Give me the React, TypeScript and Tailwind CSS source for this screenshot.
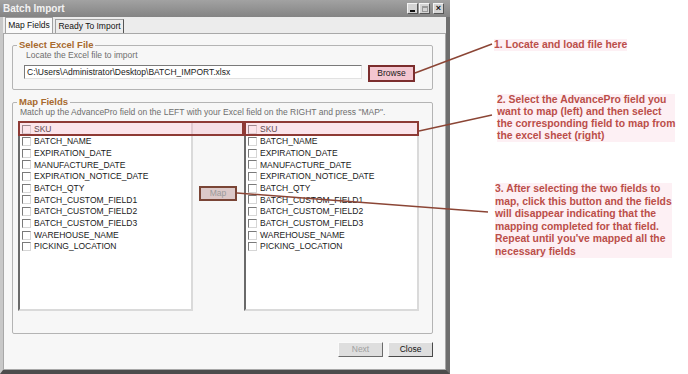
const FIELDS = [
  "SKU",
  "BATCH_NAME",
  "EXPIRATION_DATE",
  "MANUFACTURE_DATE",
  "EXPIRATION_NOTICE_DATE",
  "BATCH_QTY",
  "BATCH_CUSTOM_FIELD1",
  "BATCH_CUSTOM_FIELD2",
  "BATCH_CUSTOM_FIELD3",
  "WAREHOUSE_NAME",
  "PICKING_LOCATION",
];

function CheckBox() {
  return (
    <span className="inline-block w-[9px] h-[9px] shrink-0 bg-white border border-t-[#7a7a7a] border-l-[#7a7a7a] border-b-[#d6d6d6] border-r-[#d6d6d6]" />
  );
}

function FieldList({ className }: { className: string }) {
  return (
    <div
      className={`h-[190px] bg-white pt-[1px] pl-[2px] border-2 border-t-[#8a8a8a] border-l-[#6a6a6a] border-b-[#dadada] border-r-[#dadada] ${className}`}
    >
      {FIELDS.map((f) => (
        <div key={f} className="flex items-center gap-[3px] h-[11.7px] text-[8.5px] text-[#1a1a1a]">
          <CheckBox />
          <span>{f}</span>
        </div>
      ))}
    </div>
  );
}

function TitleButton({ children }: { children: React.ReactNode }) {
  return (
    <span className="flex items-center justify-center w-[11px] h-[11px] bg-[#d4d4d4] border border-t-[#f4f4f4] border-l-[#f4f4f4] border-b-[#555] border-r-[#555] text-[9px] font-bold leading-none text-[#111]">
      {children}
    </span>
  );
}

function Window() {
  return (
    <div className="w-[450px] h-full flex flex-col">
      <div className="h-[17px] flex items-center justify-between pl-[3px] pr-[6px] bg-gradient-to-b from-[#a2a2a2] to-[#848484]">
        <span className="text-[10px] font-bold text-[#f2f2f2]">Batch Import</span>
        <div className="flex gap-[1px]">
          <TitleButton>
            <span className="block w-[5px] h-[2px] bg-[#111] mt-[5px]" />
          </TitleButton>
          <TitleButton>
            <span className="block w-[6px] h-[6px] border border-[#999] border-t-2" />
          </TitleButton>
          <span className="ml-[2px]">
            <TitleButton>×</TitleButton>
          </span>
        </div>
      </div>

      <div className="flex-1 flex flex-col border-l-[3px] border-l-[#c8c8c8] border-r-[4px] border-r-[#6e6e6e] border-b-[4px] border-b-[#4c4c4c] bg-[#ececec]">
        <div className="h-[16px] flex items-end pl-[2px] text-[8.5px] text-[#111]">
          <div className="h-[16px] w-[48px] flex items-center justify-center bg-[#fafafa] border border-[#a0a0a0] border-b-0">
            Map Fields
          </div>
          <div className="h-[14px] w-[69px] ml-[2px] flex items-center justify-center bg-[#ececec] border border-[#a0a0a0] border-b-0 border-r-[#555]">
            Ready To Import
          </div>
        </div>

        <div className="flex-1 flex flex-col pl-[8px] pr-[12px] bg-[#f7f7f7] border border-[#a8a8a8]">
          <fieldset className="mt-[6px] border border-[#b4b4b4] rounded-[2px] pl-[11px] pb-[7px]">
            <legend className="-ml-[7px] px-[2px] text-[9.5px] leading-[10px] font-bold text-[#a86a2e]">Select Excel File</legend>
            <div className="ml-[2px] text-[8.5px] leading-[10px] text-[#6e6e6e]">Locate the Excel file to import</div>
            <div className="mt-[5px] flex items-start gap-[6px]">
              <div className="w-[338px] h-[14px] bg-white pl-[2px] text-[8.5px] leading-[12px] text-[#1a1a1a] border border-t-[#7a7a7a] border-l-[#7a7a7a] border-b-[#e2e2e2] border-r-[#e2e2e2]">
                C:\Users\Administrator\Desktop\BATCH_IMPORT.xlsx
              </div>
              <div className="w-[47px] h-[17px] flex items-center justify-center bg-[#f3c6d0] border-2 border-[#7b2d2d] text-[8.5px] text-[#1a1a1a]">
                Browse
              </div>
            </div>
          </fieldset>

          <fieldset className="mt-[7px] border border-[#b4b4b4] rounded-[2px] pl-[5px] pb-[22px]">
            <legend className="-ml-[1px] px-[2px] text-[9.5px] leading-[10px] font-bold text-[#a86a2e]">Map Fields</legend>
            <div className="ml-[2px] text-[8.5px] leading-[10px] text-[#6e6e6e]">
              Match up the AdvancePro field on the LEFT with your Excel field on the RIGHT and press "MAP".
            </div>
            <div className="mt-[4px] flex">
              <FieldList className="w-[175px]" />
              <div className="w-[51px] pl-[6px]">
                <div className="mt-[65px] w-[38px] h-[15px] flex items-center justify-center bg-[#dcc9c9] border-2 border-[#7a4536] text-[8.5px] text-[#9a9a9a]">
                  Map
                </div>
              </div>
              <FieldList className="w-[175px]" />
            </div>
          </fieldset>

          <div className="mt-[8px] flex justify-end gap-[5px] text-[8.5px]">
            <div className="w-[45px] h-[15px] flex items-center justify-center bg-[#dedede] text-[#a0a0a0] border border-t-[#fafafa] border-l-[#fafafa] border-b-[#6a6a6a] border-r-[#6a6a6a]">
              Next
            </div>
            <div className="w-[45px] h-[15px] flex items-center justify-center bg-[#dedede] text-[#111] border border-t-[#fafafa] border-l-[#fafafa] border-b-[#4a4a4a] border-r-[#4a4a4a]">
              Close
            </div>
          </div>
        </div>
      </div>
    </div>
  );
}

function Notes() {
  return (
    <div className="flex-1 flex flex-col pl-[44px] pt-[39px] text-[10.4px] font-bold text-[#bb4e49]">
      <p className="leading-[12px] w-fit bg-[#fdf0f4]">1. Locate and load file here</p>
      <p className="mt-[43px] ml-[3px] leading-[12px] w-fit bg-[#fdf0f4]">
        2. Select the AdvancePro field you
        <br />
        want to map (left) and then select
        <br />
        the corresponding field to map from
        <br />
        the excel sheet (right)
      </p>
      <p className="mt-[41px] ml-[1px] leading-[12.5px] w-fit bg-[#fdf0f4]">
        3. After selecting the two fields to
        <br />
        map, click this button and the fields
        <br />
        will disappear indicating that the
        <br />
        mapping completed for that field.
        <br />
        Repeat until you've mapped all the
        <br />
        necessary fields
      </p>
    </div>
  );
}

export default function App() {
  return (
    <div className="relative w-[688px] h-[374px] flex bg-white overflow-hidden font-['Liberation_Sans',Arial,sans-serif]">
      <Window />
      <Notes />

      {/* highlight boxes over the SKU rows */}
      <div className="absolute left-[18px] top-[121px] w-[226px] h-[15px] border-2 border-[#8e3a35] bg-[#f2a9bd]/30" />
      <div className="absolute left-[244px] top-[121px] w-[175px] h-[15px] border-2 border-[#8e3a35] bg-[#f2a9bd]/30" />

      <svg className="absolute inset-0 pointer-events-none" width="688" height="374">
        <g stroke="#8b4535" strokeWidth="1.5" fill="none">
          <line x1="415" y1="73" x2="492" y2="44" />
          <line x1="419" y1="131" x2="492" y2="115" />
          <line x1="237" y1="193" x2="488" y2="212" />
        </g>
      </svg>
    </div>
  );
}
